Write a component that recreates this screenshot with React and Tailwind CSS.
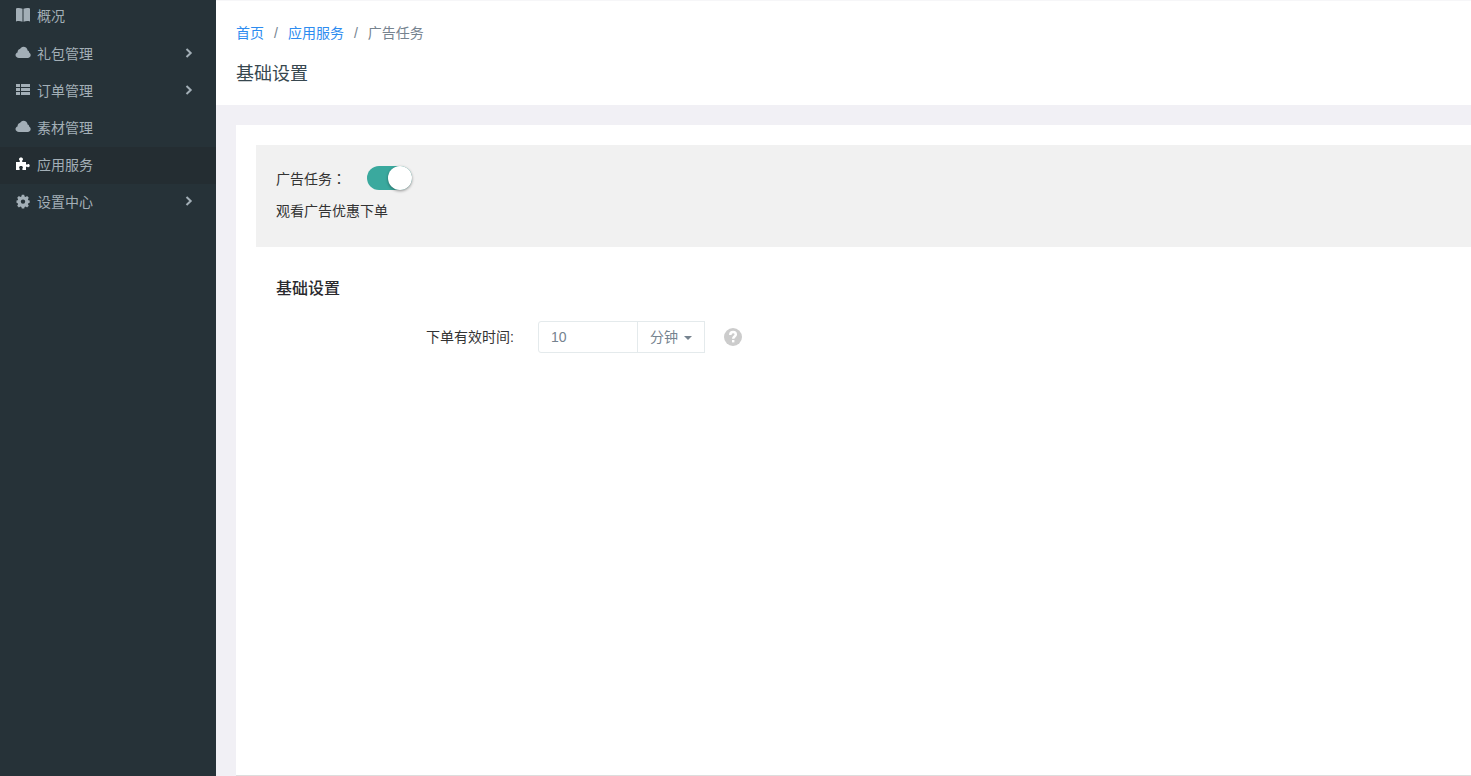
import { useState } from "react";
import clsx from "clsx";

const menuItems = [
  { key: "overview", label: "概况", icon: BookIcon },
  { key: "gifts", label: "礼包管理", icon: CloudIcon, expandable: true },
  { key: "orders", label: "订单管理", icon: ListIcon, expandable: true },
  { key: "materials", label: "素材管理", icon: CloudIcon },
  { key: "services", label: "应用服务", icon: PluginIcon },
  { key: "settings", label: "设置中心", icon: GearIcon, expandable: true },
];

function BookIcon() {
  return (
    <svg viewBox="0 0 16 16" className="size-4 shrink-0" fill="currentColor" aria-hidden="true">
      <path d="M1 1.500c2.200-.6 4.400-.5 6.500.3v13C5.400 14 3.200 13.900 1 14.500zM15 1.500c-2.200-.6-4.400-.5-6.500.3v13c2.100-.8 4.300-.9 6.500-.3z" />
    </svg>
  );
}

function CloudIcon() {
  return (
    <svg viewBox="0 0 16 16" className="size-4 shrink-0" fill="currentColor" aria-hidden="true">
      <path d="M4 13C2.100 13 .5 11.800.5 10.100c0-1.300.9-2.300 2-2.600C2.600 5.400 3.600 4.300 5 4.100 5.600 2.600 6.800 1.700 8.400 1.700c2.300 0 4 1.600 4.200 3.900 1 .3 1.600 1.100 1.700 2.100.9.500 1.400 1.400 1.400 2.400 0 1.700-1.300 2.900-3 2.900z" />
    </svg>
  );
}

function ListIcon() {
  return (
    <svg viewBox="0 0 16 16" className="size-4 shrink-0" fill="currentColor" aria-hidden="true">
      <path d="M1 2h4v3H1zM6 2h9v3H6zM1 6h4v3H1zM6 6h9v3H6zM1 10h4v3H1zM6 10h9v3H6z" />
    </svg>
  );
}

function PluginIcon() {
  return (
    <svg viewBox="0 0 16 16" className="size-4 shrink-0 text-white" fill="currentColor" aria-hidden="true">
      <path d="M1 6h3.800V4.600C4.300 4.200 4 3.800 4 3.200 4 2.200 4.900 1.500 6 1.500s2 .7 2 1.700c0 .6-.3 1-.8 1.400V6H11v2.600h1.200c.3-.4.7-.6 1.100-.6.8 0 1.400.7 1.400 1.600s-.6 1.700-1.400 1.700c-.4 0-.8-.2-1.100-.6H11V14H7.400v-1.500c.3-.3.5-.6.5-1 0-.8-.8-1.400-1.900-1.400s-1.900.6-1.900 1.400c0 .4.200.7.500 1V14H1z" />
    </svg>
  );
}

function GearIcon() {
  return (
    <svg viewBox="0 0 16 16" className="size-4 shrink-0" fill="currentColor" aria-hidden="true">
      <path
        fillRule="evenodd"
        d="M6.800 1.800h2.400l.4 1.700 1 .4 1.500-.9 1.700 1.700-.9 1.500.4 1 1.400.4v2.200l-1.400.4-.4 1 .9 1.500-1.700 1.700-1.500-.9-1 .4-.4 1.600H6.800l-.4-1.600-1-.4-1.500.9-1.700-1.700.9-1.500-.4-1-1.200-.4V7.600l1.200-.4.4-1-.9-1.500L3.900 3l1.500.9 1-.4zM8 6.400a2.200 2.200 0 1 0 0 4.400 2.200 2.200 0 0 0 0-4.400z"
      />
    </svg>
  );
}

function ChevronIcon() {
  return (
    <svg viewBox="0 0 8 10" className="h-2.5 w-2 shrink-0" fill="none" stroke="currentColor" strokeWidth="2" aria-hidden="true">
      <path d="M1.500 1L5.700 5 1.500 9" />
    </svg>
  );
}

function Sidebar({ active, onSelect }) {
  return (
    <nav className="w-[216px] shrink-0 bg-[#263238] text-[#a3afb7]">
      <ul>
        {menuItems.map((item) => (
          <li key={item.key} className="group">
            <button
              type="button"
              onClick={() => onSelect(item.key)}
              className={clsx(
                "flex h-[37px] w-full items-center gap-1.5 pr-[23px] pb-1 pl-[15px] text-left leading-5 group-first:h-9 group-first:pb-1.5",
                item.key === active && "bg-[#242d32]"
              )}
            >
              <item.icon />
              <span className="flex-1 pt-0.5">{item.label}</span>
              {item.expandable ? <ChevronIcon /> : null}
            </button>
          </li>
        ))}
      </ul>
    </nav>
  );
}

function PageHeader() {
  return (
    <header className="border-t border-[#f6f6f8] bg-white px-5 pt-[21px] pb-[17px]">
      <nav aria-label="breadcrumb">
        <ol className="flex leading-[22px] text-[#76838f]">
          <li><a href="#home" className="text-[#2d8cf0]">首页</a></li>
          <li className="px-2.5">/</li>
          <li><a href="#services" className="text-[#2d8cf0]">应用服务</a></li>
          <li className="px-2.5">/</li>
          <li>广告任务</li>
        </ol>
      </nav>
      <h1 className="mt-[17px] text-lg leading-[27px] text-[#37474f]">基础设置</h1>
    </header>
  );
}

export default function App() {
  const [active, setActive] = useState("services");
  const [enabled, setEnabled] = useState(true);
  const [minutes, setMinutes] = useState("10");
  const [unit, setUnit] = useState("minute");

  return (
    <div className="flex min-h-screen bg-[#f1f0f5] font-['Liberation_Sans','Noto_Sans_CJK_SC',sans-serif] text-sm text-[#333]">
      <Sidebar active={active} onSelect={setActive} />
      <div className="flex min-w-0 flex-1 flex-col">
        <PageHeader />
        <main className="mt-5 ml-5 flex-1 border-b border-[#ddd] bg-white pt-5 pl-5">
          <section className="bg-[#f1f1f1] px-5 pt-[21px] pb-[25px]">
            <div className="flex h-6 items-center gap-[21px]">
              <label htmlFor="ad-task">广告任务<span className="font-['Noto_Sans_CJK_TC',sans-serif]">：</span></label>
              <span className="relative flex">
                <input
                  id="ad-task"
                  type="checkbox"
                  role="switch"
                  checked={enabled}
                  onChange={(event) => setEnabled(event.target.checked)}
                  className="peer h-6 w-[45px] cursor-pointer appearance-none rounded-full bg-gray-300 checked:bg-[#3aa99e]"
                />
                <span className="pointer-events-none absolute top-0 left-0 size-6 rounded-full bg-white shadow-[0_1px_3px_rgba(0,0,0,0.4)] peer-checked:left-[21px]" />
              </span>
            </div>
            <p className="mt-2.5 leading-[22px]">观看广告优惠下单</p>
          </section>

          <section className="px-5 pt-[31px]">
            <h2 className="text-base leading-[22px] font-medium text-[#2a2a2e]">基础设置</h2>
            <div className="mt-[21px] flex items-center">
              <label htmlFor="valid-time" className="w-[238px] shrink-0 text-right">下单有效时间:</label>
              <div className="ml-6 flex h-8 text-[#76838f]">
                <input
                  id="valid-time"
                  value={minutes}
                  onChange={(event) => setMinutes(event.target.value)}
                  className="w-[100px] rounded-l-[3px] border border-[#e4eaec] px-3 outline-none"
                />
                <div className="relative -ml-px flex">
                  <select
                    aria-label="时间单位"
                    value={unit}
                    onChange={(event) => setUnit(event.target.value)}
                    className="w-[68px] appearance-none border border-[#e4eaec] bg-white pl-3 outline-none"
                  >
                    <option value="minute">分钟</option>
                    <option value="hour">小时</option>
                  </select>
                  <span className="pointer-events-none absolute top-[15px] right-[13px] border-x-4 border-t-4 border-x-transparent border-t-[#76838f]" />
                </div>
              </div>
              <button type="button" aria-label="帮助" className="ml-[19px] text-[#ccc]">
                <svg viewBox="0 0 18 18" className="size-[18px]" aria-hidden="true">
                  <circle cx="9" cy="9" r="9" fill="currentColor" />
                  <path d="M6.300 6.900C6.300 5.100 7.400 4.100 9.100 4.100s2.700 1 2.700 2.400c0 2-2.600 2.100-2.600 4.200" fill="none" stroke="#fff" strokeWidth="2.500" />
                  <path d="M8 12h2.400v2.400H8z" fill="#fff" />
                </svg>
              </button>
            </div>
          </section>
        </main>
      </div>
    </div>
  );
}
